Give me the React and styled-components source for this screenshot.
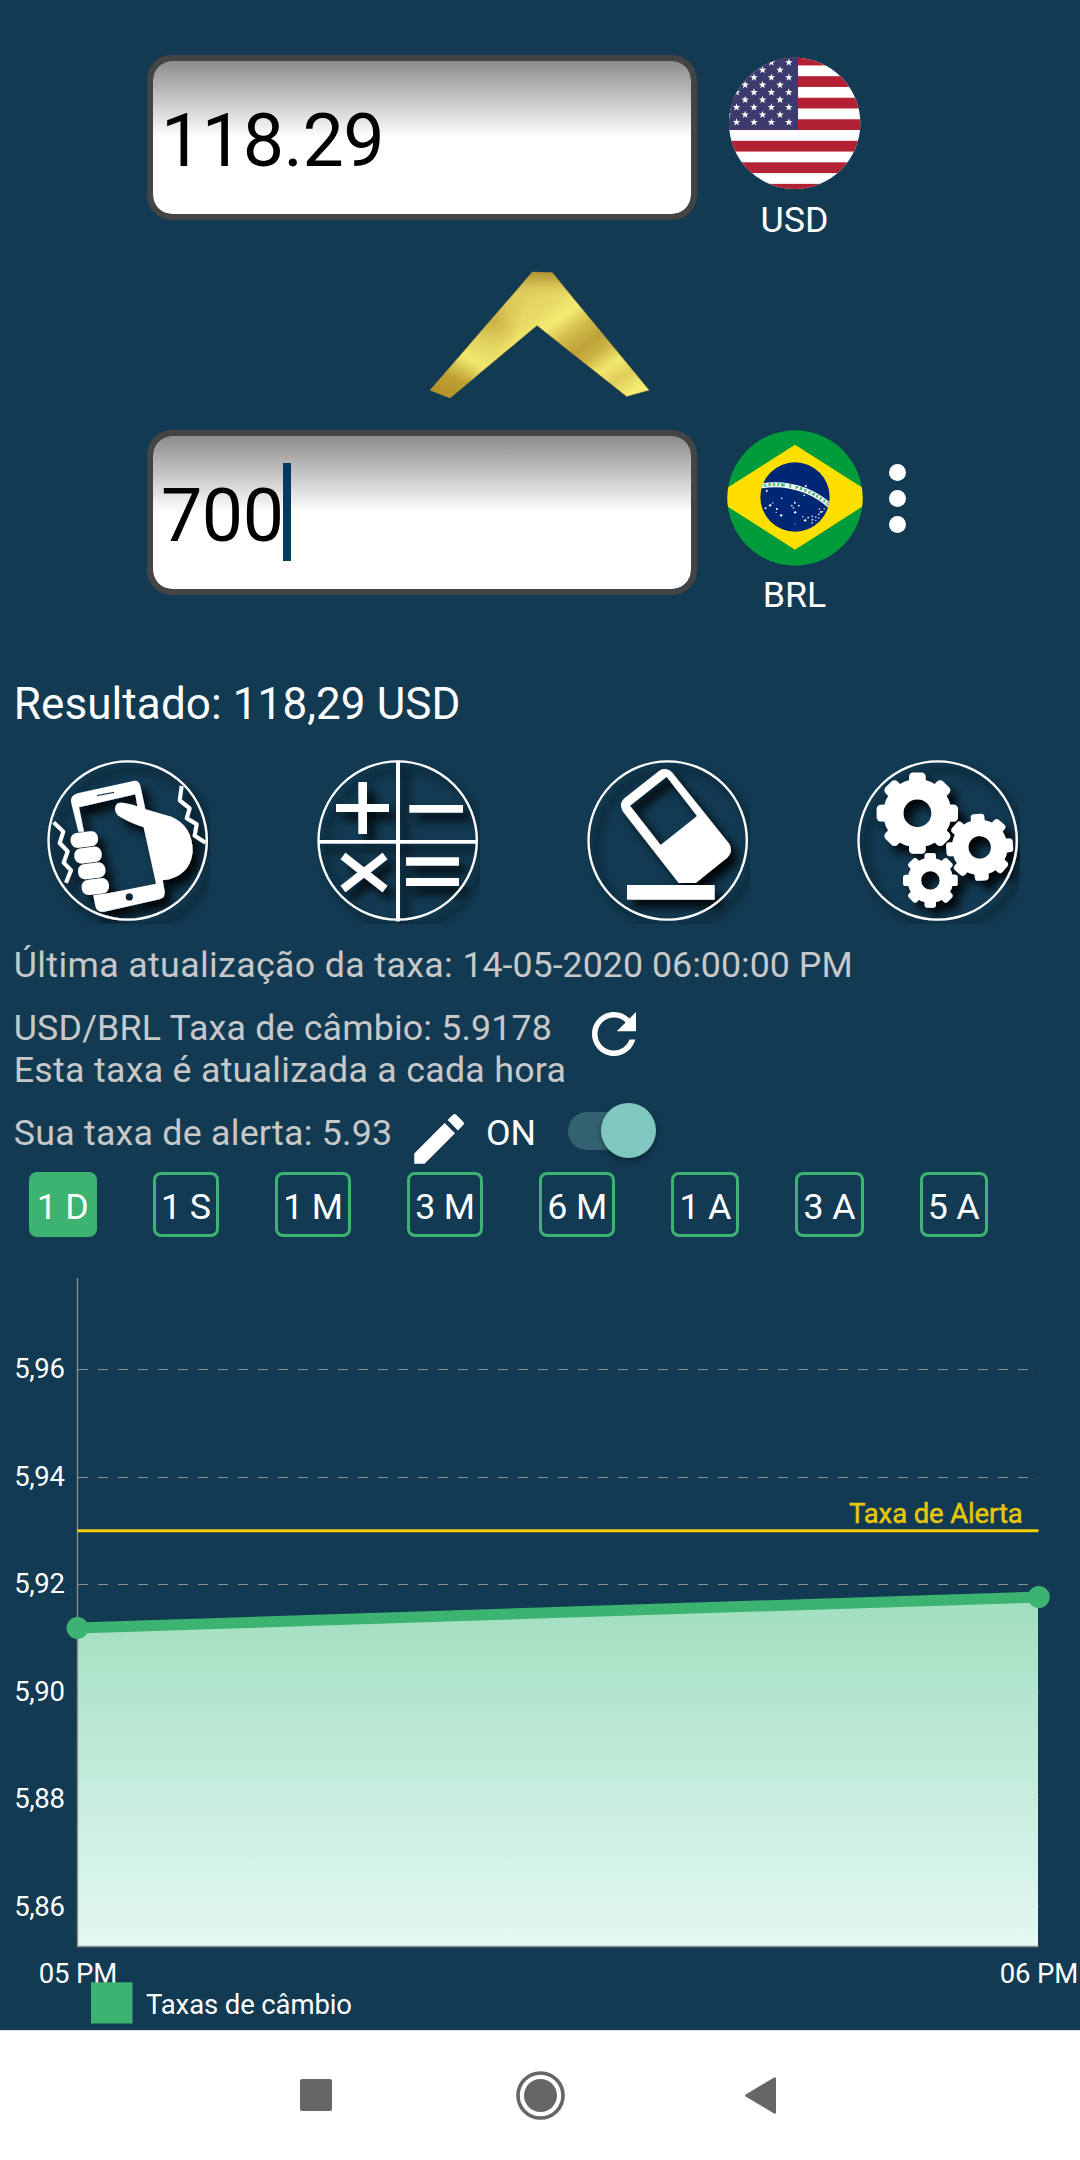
import React from 'react';
import styled, { createGlobalStyle } from 'styled-components';
import { MdEdit, MdRefresh } from 'react-icons/md';

const periods = ['1 D', '1 S', '1 M', '3 M', '6 M', '1 A', '3 A', '5 A'];

const gridLines = [
  { label: '5,96', y: 91.5 },
  { label: '5,94', y: 199.5 },
  { label: '5,92', y: 306.5 },
  { label: '5,90', y: 414 },
  { label: '5,88', y: 521.5 },
  { label: '5,86', y: 629 },
];

const starPoints = (cx, cy, r) =>
  Array.from({ length: 10 }, (_, i) => {
    const radius = i % 2 ? r * 0.4 : r;
    const angle = (Math.PI / 5) * i - Math.PI / 2;
    return `${cx + radius * Math.cos(angle)},${cy + radius * Math.sin(angle)}`;
  }).join(' ');

const FlagUS = () => {
  const stars = [];
  for (let row = 0; row < 9; row++) {
    for (let col = 0; col < 4; col++) {
      const x = (row % 2 ? 239.5 : 266) - col * 52.3;
      stars.push(<polygon key={`${row}-${col}`} points={starPoints(x, 69 + row * 22.4, 12)} />);
    }
  }
  return (
    <Flag viewBox="80.5 46.5 408 408">
      <clipPath id="us-round">
        <circle cx="283.5" cy="251.5" r="197" />
      </clipPath>
      <g clipPath="url(#us-round)">
        <rect x="80" y="45" width="410" height="420" fill="#fff" />
        {[0, 1, 2, 3, 4, 5, 6].map((i) => (
          <rect key={i} x="80" y={45.5 + i * 64.6} width="410" height="32.3" fill="#b22234" />
        ))}
        <rect x="80" y="45" width="213.5" height="226" fill="#3c3b6e" />
        <g fill="#fff">{stars}</g>
      </g>
    </Flag>
  );
};

const skyStars = [
  [199, 229, 3], [244, 251, 2.5], [209, 272, 3.5], [217, 265, 2], [195, 281, 3],
  [229, 283, 3], [227, 293, 2], [242, 302, 3.5], [283, 264, 3], [274, 273, 2.5],
  [295, 273, 2.5], [279, 280, 2.5], [284, 293, 3.5], [284, 328, 1.5], [316, 214, 3],
  [311, 242, 2.5], [307, 306, 2], [314, 317, 3.5], [323, 309, 2.5], [335, 305, 2.5],
  [346, 307, 2.5], [336, 315, 2.5], [335, 325, 2.5], [346, 317, 2], [357, 283, 2.5],
  [361, 292, 3], [355, 299, 2.5], [371, 283, 2], [366, 291, 2], [355, 310, 2],
];

const FlagBR = () => (
  <Flag viewBox="79.5 46 408 408">
    <clipPath id="br-round">
      <circle cx="283.5" cy="250" r="203" />
    </clipPath>
    <clipPath id="br-globe">
      <circle cx="283.5" cy="247" r="104" />
    </clipPath>
    <g clipPath="url(#br-round)">
      <rect x="79" y="40" width="410" height="420" fill="#009b3a" />
      <polygon points="283.5,90 530,247.5 283.5,405 37,247.5" fill="#fedf00" />
      <circle cx="283.5" cy="247" r="104" fill="#002776" />
      <g clipPath="url(#br-globe)">
        <circle cx="223.6" cy="455" r="245" fill="none" stroke="#fff" strokeWidth="15" />
        <path id="br-arc" d="M-17 455 A240.5 240.5 0 0 1 464 455" fill="none" />
        <Motto>
          <textPath href="#br-arc" startOffset="344" textLength="206">
            ORDEM E PROGRESSO
          </textPath>
        </Motto>
        <g fill="#fff">
          {skyStars.map(([x, y, r]) => (
            <circle key={`${x}-${y}`} cx={x} cy={y} r={r} />
          ))}
        </g>
      </g>
    </g>
  </Flag>
);

const Chevron = () => (
  <ChevronSvg viewBox="0 0 840 480">
    <defs>
      <linearGradient id="goldLeft" gradientUnits="userSpaceOnUse" x1="190" y1="460" x2="370" y2="80">
        <stop offset="0" stopColor="#b4942a" />
        <stop offset="0.13" stopColor="#bd9f34" />
        <stop offset="0.3" stopColor="#f2e86d" />
        <stop offset="0.45" stopColor="#e2d361" />
        <stop offset="0.62" stopColor="#c4aa42" />
        <stop offset="0.8" stopColor="#d8c657" />
        <stop offset="1" stopColor="#d2bd50" />
      </linearGradient>
      <linearGradient id="goldRight" gradientUnits="userSpaceOnUse" x1="430" y1="100" x2="680" y2="440">
        <stop offset="0" stopColor="#e2d15f" />
        <stop offset="0.15" stopColor="#e8d964" />
        <stop offset="0.27" stopColor="#f4ec71" />
        <stop offset="0.4" stopColor="#d3bd4e" />
        <stop offset="0.53" stopColor="#bfa339" />
        <stop offset="0.62" stopColor="#cbb244" />
        <stop offset="0.75" stopColor="#f2e86d" />
        <stop offset="0.87" stopColor="#dfce5b" />
        <stop offset="1" stopColor="#f5ec70" />
      </linearGradient>
      <linearGradient id="goldSeam" gradientUnits="userSpaceOnUse" x1="335" y1="0" x2="425" y2="30">
        <stop offset="0" stopColor="#fff" />
        <stop offset="1" stopColor="#000" />
      </linearGradient>
      <linearGradient id="goldTop" x1="0" y1="0" x2="0" y2="1">
        <stop offset="0" stopColor="#ae9230" />
        <stop offset="0.35" stopColor="#c4ab45" stopOpacity="0.85" />
        <stop offset="1" stopColor="#e2d15f" stopOpacity="0" />
      </linearGradient>
      <mask id="leftArm" maskUnits="userSpaceOnUse" x="0" y="0" width="840" height="480">
        <rect width="840" height="480" fill="url(#goldSeam)" />
      </mask>
      <clipPath id="chevronShape">
        <polygon points="397,66 457,68 748,421 680,440 411,227 150,444 90,421" />
      </clipPath>
    </defs>
    <g clipPath="url(#chevronShape)">
      <rect width="840" height="480" fill="url(#goldRight)" />
      <rect width="840" height="480" fill="url(#goldLeft)" mask="url(#leftArm)" />
      <rect x="340" y="64" width="180" height="80" fill="url(#goldTop)" />
    </g>
    <polygon
      points="397,66 457,68 748,421 680,440 411,227 150,444 90,421"
      fill="none"
      stroke="#8c7a35"
      strokeOpacity="0.5"
      strokeWidth="3"
    />
  </ChevronSvg>
);

const ToolIcon = ({ id, children }) => (
  <ToolSvg viewBox="0 0 600 600">
    <defs>
      <filter id={`shadow-${id}`} filterUnits="userSpaceOnUse" x="0" y="0" width="600" height="600">
        <feDropShadow dx="22" dy="24" stdDeviation="15" floodColor="#000" floodOpacity="0.9" />
      </filter>
      <clipPath id={`clip-${id}`}>
        <rect x="40" y="40" width="500" height="512" />
      </clipPath>
    </defs>
    <g clipPath={`url(#clip-${id})`}>
      <g filter={`url(#shadow-${id})`} fill="#fff">
        <circle cx="293" cy="301.5" r="237.5" fill="none" stroke="#fff" strokeWidth="7" />
        {children}
      </g>
    </g>
  </ToolSvg>
);

const ShakeIcon = () => (
  <ToolIcon id="shake">
    <path
      fillRule="evenodd"
      d="M145 275 L124 190 Q119 166 143 160 L310 123 Q326 120 331 137 L346 208 L425 230 Q488 258 488 335 Q480 410 398 421 L404 455 Q406 473 388 478 L222 515 Q201 518 196 498 L190 466 L235 460 L378 431 L341 262 Q290 245 263 226 Q247 205 263 190 Q276 184 322 199 L316 163 L147 202 L162 275 Z M201 165 L201 169 L252 159 L252 155 Z M287 471 a11 11 0 1 0 22 0 a11 11 0 1 0 -22 0 Z"
    />
    {[[163, 298.5], [174, 345.5], [185, 392.5], [196, 440]].map(([x, y]) => (
      <rect
        key={y}
        x={x - 41}
        y={y - 22.5}
        width="82"
        height="45"
        rx="20"
        transform={`rotate(-7 ${x} ${y})`}
      />
    ))}
    <g fill="none" stroke="#fff" strokeWidth="12" strokeLinejoin="round">
      <path d="M455 138 L449 181 L479 205 L470 235 L500 253 L494 287 L526 308" />
      <path d="M71 247 L100 275 L89 309 L113 334 L101 368 L123 391 L108 428" />
    </g>
  </ToolIcon>
);

const CalcIcon = () => (
  <ToolIcon id="calc">
    <rect x="288" y="62" width="12" height="482" />
    <rect x="54" y="300" width="478" height="11" />
    <rect x="108" y="192" width="159" height="24" />
    <rect x="175" y="126" width="26" height="156" />
    <rect x="328" y="195" width="161" height="23" />
    <rect x="318" y="352" width="159" height="25" />
    <rect x="318" y="414" width="159" height="24" />
    <path d="M129 348 L255 447 M255 348 L129 447" stroke="#fff" strokeWidth="24" />
  </ToolIcon>
);

const EraserIcon = () => (
  <ToolIcon id="eraser">
    <path
      fillRule="evenodd"
      d="M270 91 Q290 81 307 98 L478 312 Q490 333 473 352 L377 429 L326 429 L158 214 Q145 190 164 174 Z M290 110 L180 197 L272 315 L381 228 Z"
    />
    <rect x="171" y="435" width="263" height="44" />
  </ToolIcon>
);

const Gear = ({ cx, cy, outer, root, hole, tooth, turn = 0 }) => (
  <g transform={`translate(${cx} ${cy}) rotate(${turn})`}>
    <circle r={(root + hole) / 2} fill="none" stroke="#fff" strokeWidth={root - hole} />
    {[0, 45, 90, 135, 180, 225, 270, 315].map((angle) => (
      <rect
        key={angle}
        x={-tooth / 2}
        y={-outer}
        width={tooth}
        height={outer - hole - 10}
        rx={tooth / 4}
        transform={`rotate(${angle})`}
      />
    ))}
  </g>
);

const GearsIcon = () => (
  <ToolIcon id="gears">
    <Gear cx={232} cy={219.5} outer={122} root={102} hole={42} tooth={50} />
    <Gear cx={419} cy={322} outer={100} root={83} hole={34} tooth={41} turn={-4} />
    <Gear cx={271} cy={421} outer={82} root={68} hole={28} tooth={34} />
  </ToolIcon>
);

const Chart = () => (
  <ChartSvg viewBox="0 0 1080 752">
    <defs>
      <linearGradient id="area" gradientUnits="userSpaceOnUse" x1="0" y1="319" x2="0" y2="668">
        <stop offset="0" stopColor="#a1dec0" />
        <stop offset="1" stopColor="#e4f8f4" />
      </linearGradient>
    </defs>
    {gridLines.map(({ label, y }) => (
      <g key={label}>
        <line x1="78" y1={y} x2="1038.5" y2={y} stroke="#8c8f90" strokeWidth="1.2" strokeDasharray="10 10" />
        <AxisLabel x="14.3" y={y + 8.5}>{label}</AxisLabel>
      </g>
    ))}
    <polygon points="77.5,350 1038,319 1038,668 77.5,668" fill="url(#area)" />
    <path d="M77.5 0 V668.5 H1038.5" fill="none" stroke="#8c8c8c" strokeWidth="1.4" />
    <line x1="77.5" y1="252.8" x2="1038.5" y2="252.8" stroke="#f5d003" strokeWidth="3" />
    <AlertLabel x="849" y="245">Taxa de Alerta</AlertLabel>
    <line x1="77.5" y1="350" x2="1038.5" y2="319" stroke="#3cb371" strokeWidth="11" />
    <circle cx="77.5" cy="350" r="11" fill="#3cb371" />
    <circle cx="1038.8" cy="319" r="11" fill="#3cb371" />
    <text x="78" y="704.7" textAnchor="middle">05 PM</text>
    <text x="1039" y="704.7" textAnchor="middle">06 PM</text>
    <rect x="91" y="704.3" width="41.5" height="41.2" fill="#3cb371" />
    <text x="146" y="736">Taxas de câmbio</text>
  </ChartSvg>
);

const App = () => (
  <Screen>
    <GlobalStyle />
    <CurrencyRow>
      <Amount>118.29</Amount>
      <Currency>
        <FlagUS />
        USD
      </Currency>
    </CurrencyRow>
    <Chevron />
    <CurrencyRow>
      <Amount>
        700
        <Caret />
      </Amount>
      <Currency>
        <FlagBR />
        BRL
      </Currency>
      <Menu>
        <Dot />
        <Dot />
        <Dot />
      </Menu>
    </CurrencyRow>
    <Result>Resultado: 118,29 USD</Result>
    <Tools>
      <ShakeIcon />
      <CalcIcon />
      <EraserIcon />
      <GearsIcon />
    </Tools>
    <Updated>
      Última atualização da taxa: <Stamp>14-05-2020 06:00:00 PM</Stamp>
    </Updated>
    <RateRow>
      <Rate>
        <Line $tracking="0.17px">USD/BRL Taxa de câmbio: 5.9178</Line>
        <Line $tracking="0.28px">Esta taxa é atualizada a cada hora</Line>
      </Rate>
      <RefreshIcon />
    </RateRow>
    <AlertRow>
      <AlertText $tracking="0.24px">Sua taxa de alerta: 5.93</AlertText>
      <EditIcon />
      <State>ON</State>
      <Track>
        <Thumb />
      </Track>
    </AlertRow>
    <Periods>
      {periods.map((period, i) => (
        <Period key={period} $active={i === 0}>
          {period}
        </Period>
      ))}
    </Periods>
    <Chart />
    <NavBar>
      <NavIcon viewBox="0 0 60 60">
        <rect x="14" y="14" width="32" height="32" rx="2" />
      </NavIcon>
      <NavIcon viewBox="0 0 60 60">
        <circle cx="30.5" cy="30.5" r="22.5" fill="none" stroke="#666" strokeWidth="3.6" />
        <circle cx="30.5" cy="30.5" r="16.5" />
      </NavIcon>
      <NavIcon viewBox="0 0 60 60">
        <path d="M40.8 13.5 V47.5 L12.3 30.5 Z" stroke="#666" strokeWidth="2.4" strokeLinejoin="round" />
      </NavIcon>
    </NavBar>
  </Screen>
);

const GlobalStyle = createGlobalStyle`
  * {
    box-sizing: border-box;
  }

  body {
    margin: 0;
    background: #123a52;
  }
`;

const Screen = styled.main`
  display: flex;
  flex-direction: column;
  width: 1080px;
  height: 2160px;
  padding-top: 55px;
  overflow: hidden;
  background: #123a52;
  color: #fff;
  font-family: Roboto, sans-serif;
  font-size: 35.75px;
  line-height: 42px;
`;

const CurrencyRow = styled.section`
  display: flex;
  align-items: flex-start;
  height: 190px;
  padding-left: 147px;
`;

const Amount = styled.div`
  display: flex;
  align-items: center;
  width: 550px;
  height: 165px;
  padding: 7px 8px 0;
  border: 6px solid #444;
  border-radius: 25px;
  background: linear-gradient(#8c8c8c, #fff 50%) padding-box;
  color: #000;
  font-size: 73.5px;
  letter-spacing: -0.45px;
  line-height: 88px;
`;

const Caret = styled.span`
  width: 8px;
  height: 98px;
  margin: -8px 0 0 -0.5px;
  background: #003a60;
`;

const Currency = styled.div`
  display: flex;
  flex-direction: column;
  align-items: center;
  gap: 8px;
  width: 136px;
  margin-left: 29.5px;
`;

const Flag = styled.svg`
  display: block;
  width: 136px;
  height: 136px;
`;

const Motto = styled.text`
  fill: #009b3a;
  font-size: 13px;
  font-weight: 900;
`;

const Menu = styled.div`
  display: flex;
  flex-direction: column;
  gap: 8.5px;
  margin: 34px 0 0 26px;
`;

const Dot = styled.span`
  width: 17.5px;
  height: 17.5px;
  border-radius: 50%;
  background: #fff;
`;

const ChevronSvg = styled.svg`
  display: block;
  width: 280px;
  height: 160px;
  margin: 5px 0 20px 400px;
`;

const Result = styled.h1`
  height: 52px;
  margin: 58px 0 10px;
  padding-left: 13.75px;
  font-size: 44px;
  font-weight: 400;
  letter-spacing: 0.1px;
  line-height: 52px;
`;

const Tools = styled.nav`
  display: grid;
  grid-template-columns: repeat(4, 270px);
  padding-left: 30px;
  height: 200px;
`;

const ToolSvg = styled.svg`
  display: block;
  width: 200px;
  height: 200px;
`;

const Updated = styled.p`
  height: 42px;
  margin: 4.5px 0 0;
  padding-left: 13.75px;
  color: #c8c8c8;
  letter-spacing: 0.36px;
`;

const Stamp = styled.span`
  letter-spacing: 0.02px;
`;

const RateRow = styled.section`
  display: flex;
  height: 84px;
  margin-top: 21px;
  padding-left: 13.75px;
`;

const Rate = styled.div`
  width: 567px;
`;

const Line = styled.div`
  color: #c8c8c8;
  letter-spacing: ${({ $tracking }) => $tracking};
`;

const RefreshIcon = styled(MdRefresh)`
  width: 66px;
  height: 66px;
  margin-top: -6.5px;
  color: #fff;
`;

const AlertRow = styled.section`
  display: flex;
  align-items: flex-start;
  height: 60px;
  margin-top: 21px;
  padding-left: 13.75px;
`;

const AlertText = styled(Line)`
  width: 391.75px;
`;

const EditIcon = styled(MdEdit)`
  width: 66px;
  height: 66px;
  margin-top: -6px;
`;

const State = styled.div`
  width: 82px;
  margin-left: 14.5px;
`;

const Track = styled.div`
  display: flex;
  align-items: center;
  justify-content: flex-end;
  width: 77px;
  height: 38.5px;
  margin-top: -0.5px;
  border-radius: 19.25px;
  background: #336371;
`;

const Thumb = styled.span`
  flex: none;
  width: 55px;
  height: 55px;
  margin-right: -11px;
  border-radius: 50%;
  background: #80c7c0;
  box-shadow: 0 3px 6px rgba(0, 0, 0, 0.35);
`;

const Periods = styled.nav`
  display: flex;
  gap: 56px;
  height: 106px;
  padding-left: 28.5px;
`;

const Period = styled.button`
  height: 65px;
  padding: 4px 5.25px 0;
  border: 3px solid #3cb371;
  border-radius: 8px;
  background: ${({ $active }) => ($active ? '#3cb371' : 'transparent')};
  color: #fff;
  font: 35.75px/42px Roboto, sans-serif;
  letter-spacing: -0.2px;
  white-space: nowrap;
`;

const ChartSvg = styled.svg`
  display: block;
  flex: none;
  width: 1080px;
  height: 752px;
  font-size: 27.5px;
  letter-spacing: -0.12px;

  text {
    fill: #fff;
  }
`;

const AxisLabel = styled.text`
  letter-spacing: -0.4px;
`;

const AlertLabel = styled.text`
  && {
    fill: #e6c60a;
    stroke: #e6c60a;
    stroke-width: 0.5px;
  }
`;

const NavBar = styled.footer`
  display: flex;
  flex: none;
  justify-content: center;
  gap: 164px;
  height: 130px;
  padding-top: 34px;
  border-top: 1px solid #dcdcdc;
  background: #fff;
`;

const NavIcon = styled.svg`
  width: 60px;
  height: 60px;
  fill: #666;
`;

export default App;
